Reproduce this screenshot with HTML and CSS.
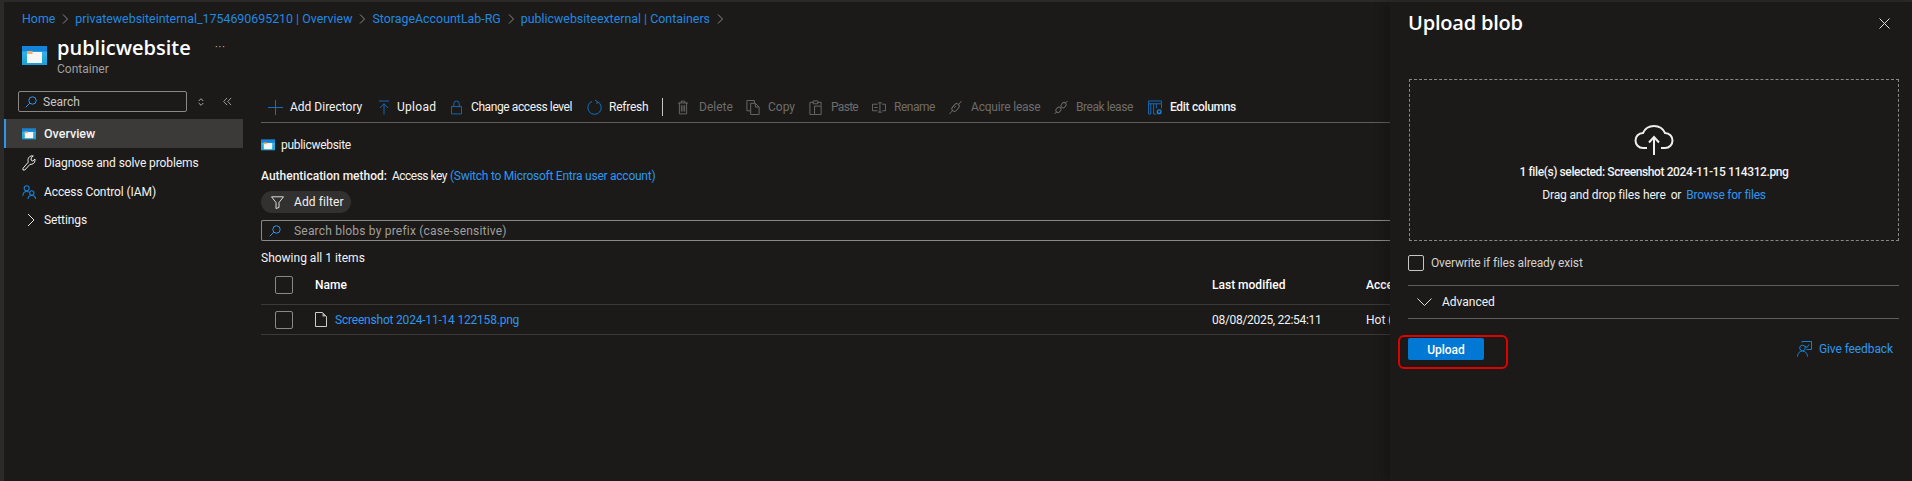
FILE: index.html
```html
<!DOCTYPE html>
<html lang="en">
<head>
<meta charset="utf-8">
<title>Upload blob</title>
<link rel="stylesheet" href="styles.css">
</head>
<body>
<svg class="defs" aria-hidden="true"><defs>
  <linearGradient id="boxfill" x1="0" y1="0" x2="0" y2="1"><stop offset="0" stop-color="#3cbdea"/><stop offset="1" stop-color="#1b9ed6"/></linearGradient>
  <symbol id="box" viewBox="0 0 25 19"><rect width="25" height="19" fill="url(#boxfill)"/><rect width="25" height="5.500" fill="#1384dc"/><rect x="5" y="6" width="15" height="11" fill="#f6f6f6"/><rect x="5" y="5" width="5.500" height="3" fill="#f2ab6c"/></symbol>
</defs></svg>
<div class="page">
  <div class="blade">
    <nav class="crumbs">
      <a>Home</a><svg class="sep" viewBox="0 0 6 10"><path d="M1 .5 5.5 5 1 9.5"/></svg>
      <a>privatewebsiteinternal_1754690695210 | Overview</a><svg class="sep" viewBox="0 0 6 10"><path d="M1 .5 5.5 5 1 9.5"/></svg>
      <a>StorageAccountLab-RG</a><svg class="sep" viewBox="0 0 6 10"><path d="M1 .5 5.5 5 1 9.5"/></svg>
      <a>publicwebsiteexternal | Containers</a><svg class="sep" viewBox="0 0 6 10"><path d="M1 .5 5.5 5 1 9.5"/></svg>
    </nav>
    <header class="title-row">
      <svg class="res-icon big"><use href="#box"/></svg>
      <div class="title-text">
        <h1>publicwebsite</h1>
        <div class="sub">Container</div>
      </div>
      <span class="more">···</span>
    </header>
    <div class="body">
      <aside class="side">
        <div class="side-tools">
          <div class="side-search">
            <svg class="i12 blue-s" viewBox="0 0 12 12"><circle cx="7.5" cy="4.5" r="3.7"/><path d="M4.8 7.2 .7 11.3"/></svg>
            <span>Search</span>
          </div>
          <svg class="updown" viewBox="0 0 6 8"><path d="M.7 3 3 .7 5.300 3M.7 5 3 7.300 5.300 5"/></svg>
          <svg class="collapse" viewBox="0 0 10 10"><path d="M4.500 1 .8 5l3.700 4M9 1 5.300 5 9 9"/></svg>
        </div>
        <a class="nav on"><svg class="res-icon small"><use href="#box"/></svg><span>Overview</span></a>
        <a class="nav"><svg class="nav-i" viewBox="0 0 14 16"><path fill="none" stroke="#eee" d="M1 13.300 1 15 2.800 15 8 9.300C10.500 9.800 13 8 13 5.300L13 4 10.800 6 9 5 9.300 2.500 11.300 1C8 .3 6 2.500 6 5.300 6 6 6.200 6.500 6.400 7z"/></svg><span>Diagnose and solve problems</span></a>
        <a class="nav"><svg class="nav-i" viewBox="0 0 15 16"><g fill="none" stroke="#1a7fd4" stroke-width="1.200"><circle cx="5" cy="4" r="2.700"/><path d="M1 12c0-3 1.500-4.500 4-4.500 1 0 1.700.2 2.300.6"/><circle cx="10.500" cy="9" r="2.300"/><path d="M6.500 15.500c0-2.500 1.500-3.700 4-3.700s4 1.200 4 3.700"/></g></svg><span>Access Control (IAM)</span></a>
        <a class="nav"><svg class="nav-i chev" viewBox="0 0 8 14"><path fill="none" stroke="#ddd" d="M1 1 7 7 1 13"/></svg><span>Settings</span></a>
      </aside>
      <main class="content">
        <div class="toolbar">
          <button class="tool t-add"><svg viewBox="0 0 15 15"><path class="bs" d="M7.500 0v15M0 7.500h15"/></svg><span>Add Directory</span></button>
          <button class="tool t-up"><svg viewBox="0 0 13 15"><path class="bs" d="M1 .5h11M6.500 15V3.500M2 8l4.500-4.500L11 8"/></svg><span>Upload</span></button>
          <button class="tool t-lock"><svg viewBox="0 0 12 15"><path class="bs" d="M.5 6.500h11v8H.5zM3 6.500V3.500a3 3 0 0 1 6 0v3"/></svg><span>Change access level</span></button>
          <button class="tool t-ref"><svg viewBox="0 0 15 15"><path class="bs" d="M5 1.400A6.700 6.700 0 1 0 10.500 1.600M8 .2 10.500 1.600 9.800 4"/></svg><span>Refresh</span></button>
          <i class="vr"></i>
          <button class="tool off t-del"><svg viewBox="0 0 11 15"><path class="gs" d="M0 2.500h11M3.500 2.500V.5h4v2M1.500 2.500v12h8v-12M3.700 5v7M5.500 5v7M7.300 5v7"/></svg><span>Delete</span></button>
          <button class="tool off t-copy"><svg viewBox="0 0 14 16"><path class="gs" d="M.5.500h8l0 3M.5.500v11h4M4.500 3.500h5l4 4v8h-9zM9.500 3.500v4h4"/></svg><span>Copy</span></button>
          <button class="tool off t-paste"><svg viewBox="0 0 13 16"><path class="gs" d="M4 2.500H.5v13H5M9 2.500h3.500V6M4 4V1h5v3zM5.500 6.500h7v9h-7z"/></svg><span>Paste</span></button>
          <button class="tool off t-ren"><svg viewBox="0 0 15 11"><path class="gs" d="M6 2H.5v7H6M11 2h3.500v7H11M8.500.5v10M6.500.5h4M6.500 10.500h4M2.500 5.500H6"/></svg><span>Rename</span></button>
          <button class="tool off t-acq"><svg viewBox="0 0 14 15"><path class="gs" d="M.5 14.500l3.300-3.700M10.200 4.500 13.500.500"/><rect class="gs" x="4.300" y="3" width="5.500" height="9" rx="2.700" transform="rotate(42 7 7.500)"/><path class="gs" d="M5.500 8 7.500 6"/></svg><span>Acquire lease</span></button>
          <button class="tool off t-brk"><svg viewBox="0 0 15 15"><path class="gs" d="M.5 14.500l2.500-2.700M12 3.200l2.500-2.700"/><rect class="gs" x="2.500" y="7" width="4.500" height="6" rx="2" transform="rotate(42 4.700 10)"/><rect class="gs" x="8" y="2" width="4.500" height="6" rx="2" transform="rotate(42 10.200 5)"/></svg><span>Break lease</span></button>
          <button class="tool t-edit"><svg viewBox="0 0 15 15"><path class="bs" d="M.5.500h14v3H.5zM.5 3.500v11h2.500v-11M6 3.500v11h3M9 3.500v5M14.500 3.500v5"/><circle class="bs2" cx="12" cy="12" r="2"/></svg><span class="strong">Edit columns</span></button>
        </div>
        <div class="res-line"><svg class="res-icon small"><use href="#box"/></svg><span>publicwebsite</span></div>
        <p class="auth"><b>Authentication method:</b> <span class="key">Access key</span> <a>(Switch to Microsoft Entra user account)</a></p>
        <div class="pill"><svg viewBox="0 0 13 13"><path fill="none" stroke="#ddd" d="M.5.800h12L8 6.500v5l-3 1v-6z"/></svg><span>Add filter</span></div>
        <div class="blob-search"><svg class="i12 blue-s" viewBox="0 0 12 12"><circle cx="7.500" cy="4.500" r="3.700"/><path d="M4.800 7.200 .7 11.300"/></svg><span>Search blobs by prefix (case-sensitive)</span></div>
        <div class="count">Showing all 1 items</div>
        <div class="tr th">
          <i class="cb"></i><div class="c-name">Name</div><div class="c-mod">Last modified</div><div class="c-acc">Access tier</div>
        </div>
        <div class="tr td">
          <i class="cb"></i>
          <div class="c-name file"><svg viewBox="0 0 12 15"><path fill="none" stroke="#ccc" d="M.5.500h7l4 4v10H.5z"/><path fill="#aaa" d="M7.500.5v4h4z"/></svg><a>Screenshot 2024-11-14 122158.png</a></div>
          <div class="c-mod date">08/08/2025, 22:54:11</div><div class="c-acc">Hot (Inferred)</div>
        </div>
      </main>
    </div>
  </div>
  <section class="panel">
    <div class="panel-head">
      <h2>Upload blob</h2>
      <svg class="close" viewBox="0 0 11 11"><path d="M.5.500l10 10M10.500.500l-10 10"/></svg>
    </div>
    <div class="drop">
      <svg class="cloud" viewBox="0 0 40 30"><g fill="none" stroke="#eee" stroke-width="2"><path d="M13 23H9C4.500 23 1.500 19.500 1.500 15.500S4.500 8 9 8C11 3.500 15 1 20 1S29 3.500 31 8c4.500 0 7.500 3.500 7.500 7.500S35.500 23 31 23H27"/><path d="M20 30V12M15 17.500l5-5.500 5 5.500"/></g></svg>
      <div class="sel">1 file(s) selected: Screenshot 2024-11-15 114312.png</div>
      <div class="drag"><span>Drag and drop files here</span><span>or</span><a>Browse for files</a></div>
    </div>
    <label class="over"><i class="cb2"></i><span>Overwrite if files already exist</span></label>
    <div class="adv"><svg viewBox="0 0 15 8"><path fill="none" stroke="#ddd" d="M.5.500l7 7 7-7"/></svg><span>Advanced</span></div>
    <div class="actions">
      <div class="annot"><button class="primary">Upload</button></div>
      <a class="fb"><svg viewBox="0 0 15 16"><g fill="none" stroke="#1a7fd4"><path d="M5 1.500V.5h9.500v8H9.500"/><circle cx="5.500" cy="7" r="2.800"/><path d="M.5 15.500c0-3 2-5.500 5-5.500s5 2.500 5 5.500M8 5l2 1.500 2-3"/></g></svg><span>Give feedback</span></a>
    </div>
  </section>
</div>
</body>
</html>
```
FILE: styles.css
```css
* { box-sizing: border-box; }
html, body { margin: 0; height: 100%; }
body { background: #1b1a19; color: #f3f2f1; font: 12px/16px Roboto, "Liberation Sans", sans-serif; overflow: hidden; }
a { color: #2f96ee; }
svg { display: block; flex: none; }
h1, h2, p { margin: 0; }
svg.defs { width: 0; height: 0; position: absolute; }

.page { display: flex; width: 1912px; height: 481px; border-top: 2px solid #2a2a29; border-left: 4px solid #2a2a29; }
.blade { width: 1386px; flex: none; overflow: hidden; }

.crumbs { display: flex; align-items: center; height: 18px; margin: 8px 0 0 18px; font-size: 12.400px; }
.crumbs a { color: #2188e0; }
.sep { width: 6px; height: 10px; margin: 0 7px 0 7px; fill: none; stroke: #8a8886; }

.title-row { display: flex; height: 48px; margin: 7px 0 0 18px; }
.res-icon.big { width: 25px; height: 19px; margin: 11px 10px 0 0; }
.res-icon.small { width: 14px; height: 12px; }
.title-text { width: 158px; }
.title-text h1 { font: 600 20px/26px "Open Sans", Roboto, sans-serif; color: #fff; letter-spacing: 0; }
.sub { margin-top: 1px; line-height: 14px; color: #a19f9d; }
.more { margin-top: 5px; color: #ccc; font-size: 10px; letter-spacing: 1px; }

.body { display: flex; margin-top: 8px; }
.side { width: 239px; flex: none; }
.side-tools { display: flex; align-items: center; height: 21px; margin-bottom: 7px; padding-left: 14px; }
.side-search { display: flex; align-items: center; gap: 6px; width: 169px; height: 21px; padding-left: 6px; border: 1px solid #8a8886; border-radius: 2px; color: #c8c6c4; }
.i12 { width: 12px; height: 12px; }
.blue-s { fill: none; stroke: #2f96ee; }
.updown { width: 6px; height: 8px; margin-left: 11px; fill: none; stroke: #aaa; }
.collapse { width: 9px; height: 9px; margin-left: 19px; fill: none; stroke: #aaa; }

.nav { display: flex; align-items: center; height: 29px; padding-left: 18px; color: #f3f2f1; font-size: 12px; letter-spacing: -.1px; }
.nav:last-child { height: 28px; }
.nav > svg { width: 14px; height: 16px; margin-right: 8px; }
.nav > .res-icon.small { height: 12px; }
.nav > .chev { width: 8px; height: 14px; margin: 0 9px 0 5px; }
.nav.on { background: #3b3a39; box-shadow: inset 2px 0 0 #2f96ee; font-size: 12.500px; font-weight: 500; letter-spacing: 0; }

.content { width: 1129px; margin-left: 18px; flex: none; overflow: hidden; }
.toolbar { display: flex; align-items: center; height: 32px; padding: 1px 0 0 7px; border-bottom: 1px solid #605e5c; }
.tool { display: flex; align-items: center; flex: none; height: 20px; padding: 0; border: 0; background: none; color: #f3f2f1; font: 12px/16px Roboto, sans-serif; white-space: nowrap; }
.tool svg { height: 15px; margin-right: 7px; }
.t-add { width: 110px; }
.t-add svg { width: 15px; }
.t-up { width: 73px; }
.t-up svg { width: 12px; }
.t-up span { letter-spacing: .3px; }
.t-lock { width: 136px; }
.t-lock svg { width: 11px; margin-right: 9px; }
.t-lock span { letter-spacing: -.4px; }
.t-ref { width: 75px; }
.t-ref svg { width: 15px; }
.t-ref span { letter-spacing: -.25px; }
.t-del { width: 68px; }
.t-del svg { width: 10px; margin-right: 11px; }
.t-copy { width: 63px; }
.t-copy svg { width: 14px; margin-right: 8px; }
.t-paste { width: 63px; }
.t-paste svg { width: 13px; margin-right: 9px; }
.t-paste span { letter-spacing: -.7px; }
.t-ren { width: 77px; }
.t-ren svg { width: 14px; margin-right: 8px; }
.t-ren span { letter-spacing: -.5px; }
.t-acq { width: 105px; }
.t-acq svg { width: 13px; margin-right: 9px; }
.t-acq span { letter-spacing: -.2px; }
.t-brk { width: 94px; }
.t-brk svg { width: 14px; margin-right: 8px; }
.t-brk span { letter-spacing: -.45px; }
.t-edit svg { width: 14px; margin-right: 8px; }
.t-edit span { letter-spacing: -.3px; }
.bs { fill: none; stroke: #1170c4; }
.bs2 { fill: #1b1a19; stroke: #1a80d8; stroke-width: 1.500; }
.gs { fill: none; stroke: #6e6c6a; }
.tool.off { color: #6e6c6a; }
.strong { font-weight: 500; }
.vr { width: 1px; height: 18px; margin-right: 15px; background: #c8c6c4; }

.res-line { display: flex; align-items: center; gap: 6px; margin-top: 14px; height: 16px; letter-spacing: -.3px; }
.auth { margin-top: 15px; height: 16px; }
.auth b { font-weight: 500; margin-right: 2px; }
.key { letter-spacing: -.5px; }
.auth a { letter-spacing: -.25px; }
.pill { display: flex; align-items: center; gap: 10px; width: 90px; height: 22px; margin-top: 7px; padding-left: 10px; border-radius: 11px; background: #323130; letter-spacing: .1px; }
.pill svg { width: 13px; height: 13px; }
.blob-search { display: flex; align-items: center; gap: 13px; height: 21px; margin-top: 7px; padding-left: 7px; border: 1px solid #8a8886; border-right: 0; border-radius: 2px 0 0 2px; color: #a19f9d; letter-spacing: .2px; }
.count { margin-top: 9px; height: 16px; }

.tr { display: flex; align-items: center; border-bottom: 1px solid #3b3a39; }
.th { height: 39px; padding-bottom: 1px; font-weight: 500; color: #fff; }
.td { height: 30px; }
.cb { width: 18px; height: 18px; flex: none; margin: 0 22px 0 14px; border: 1px solid #8a8886; border-radius: 2px; }
.c-name { width: 897px; flex: none; }
.c-mod { width: 154px; flex: none; }
.date { letter-spacing: -.3px; }
.c-acc { white-space: nowrap; }
.file { display: flex; align-items: center; gap: 8px; }
.file svg { width: 12px; height: 15px; }
.file a { color: #2f96ee; letter-spacing: -.2px; }

.panel { flex: 1; padding: 0 14px 0 18px; background: #1b1a19; box-shadow: -6px 0 10px rgba(0,0,0,.18); }
.panel-head { display: flex; justify-content: space-between; align-items: center; height: 42px; }
.panel-head h2 { font: 600 20px/26px "Open Sans", Roboto, sans-serif; letter-spacing: -.2px; color: #fff; }
.close { width: 11px; height: 11px; margin-right: 9px; fill: none; stroke: #ddd; }
.drop { display: flex; flex-direction: column; align-items: center; width: 490px; height: 162px; margin: 35px 0 0 1px; padding-top: 45px; border: 1px dashed #8a8886; }
.cloud { width: 40px; height: 30px; }
.sel { margin-top: 9px; font-weight: 500; letter-spacing: -.4px; }
.drag { display: flex; gap: 5px; margin-top: 7px; letter-spacing: -.15px; }
.drag a { color: #2f96ee; letter-spacing: -.25px; }
.over { display: flex; align-items: center; gap: 7px; height: 16px; margin-top: 14px; color: #d2d0ce; letter-spacing: -.15px; }
.cb2 { width: 16px; height: 16px; border: 1px solid #c8c6c4; border-radius: 2px; }
.adv { display: flex; align-items: center; gap: 10px; height: 34px; margin-top: 14px; padding-left: 9px; border-top: 1px solid #605e5c; border-bottom: 1px solid #605e5c; }
.adv svg { width: 15px; height: 8px; }
.actions { display: flex; justify-content: space-between; align-items: center; margin-top: 19px; height: 22px; padding-right: 6px; }
.annot { position: relative; }
.annot::after { content: ""; box-sizing: border-box; position: absolute; left: -10px; top: -3px; width: 110px; height: 34px; border: 2px solid #e00000; border-radius: 6px; }
.primary { display: block; width: 76px; height: 22px; border: 0; border-radius: 2px; background: #0078d4; color: #fff; font: 500 12px/22px Roboto, sans-serif; }
.fb { display: flex; align-items: center; gap: 7px; color: #2f96ee; letter-spacing: -.1px; }
.fb svg { width: 15px; height: 16px; }
```
